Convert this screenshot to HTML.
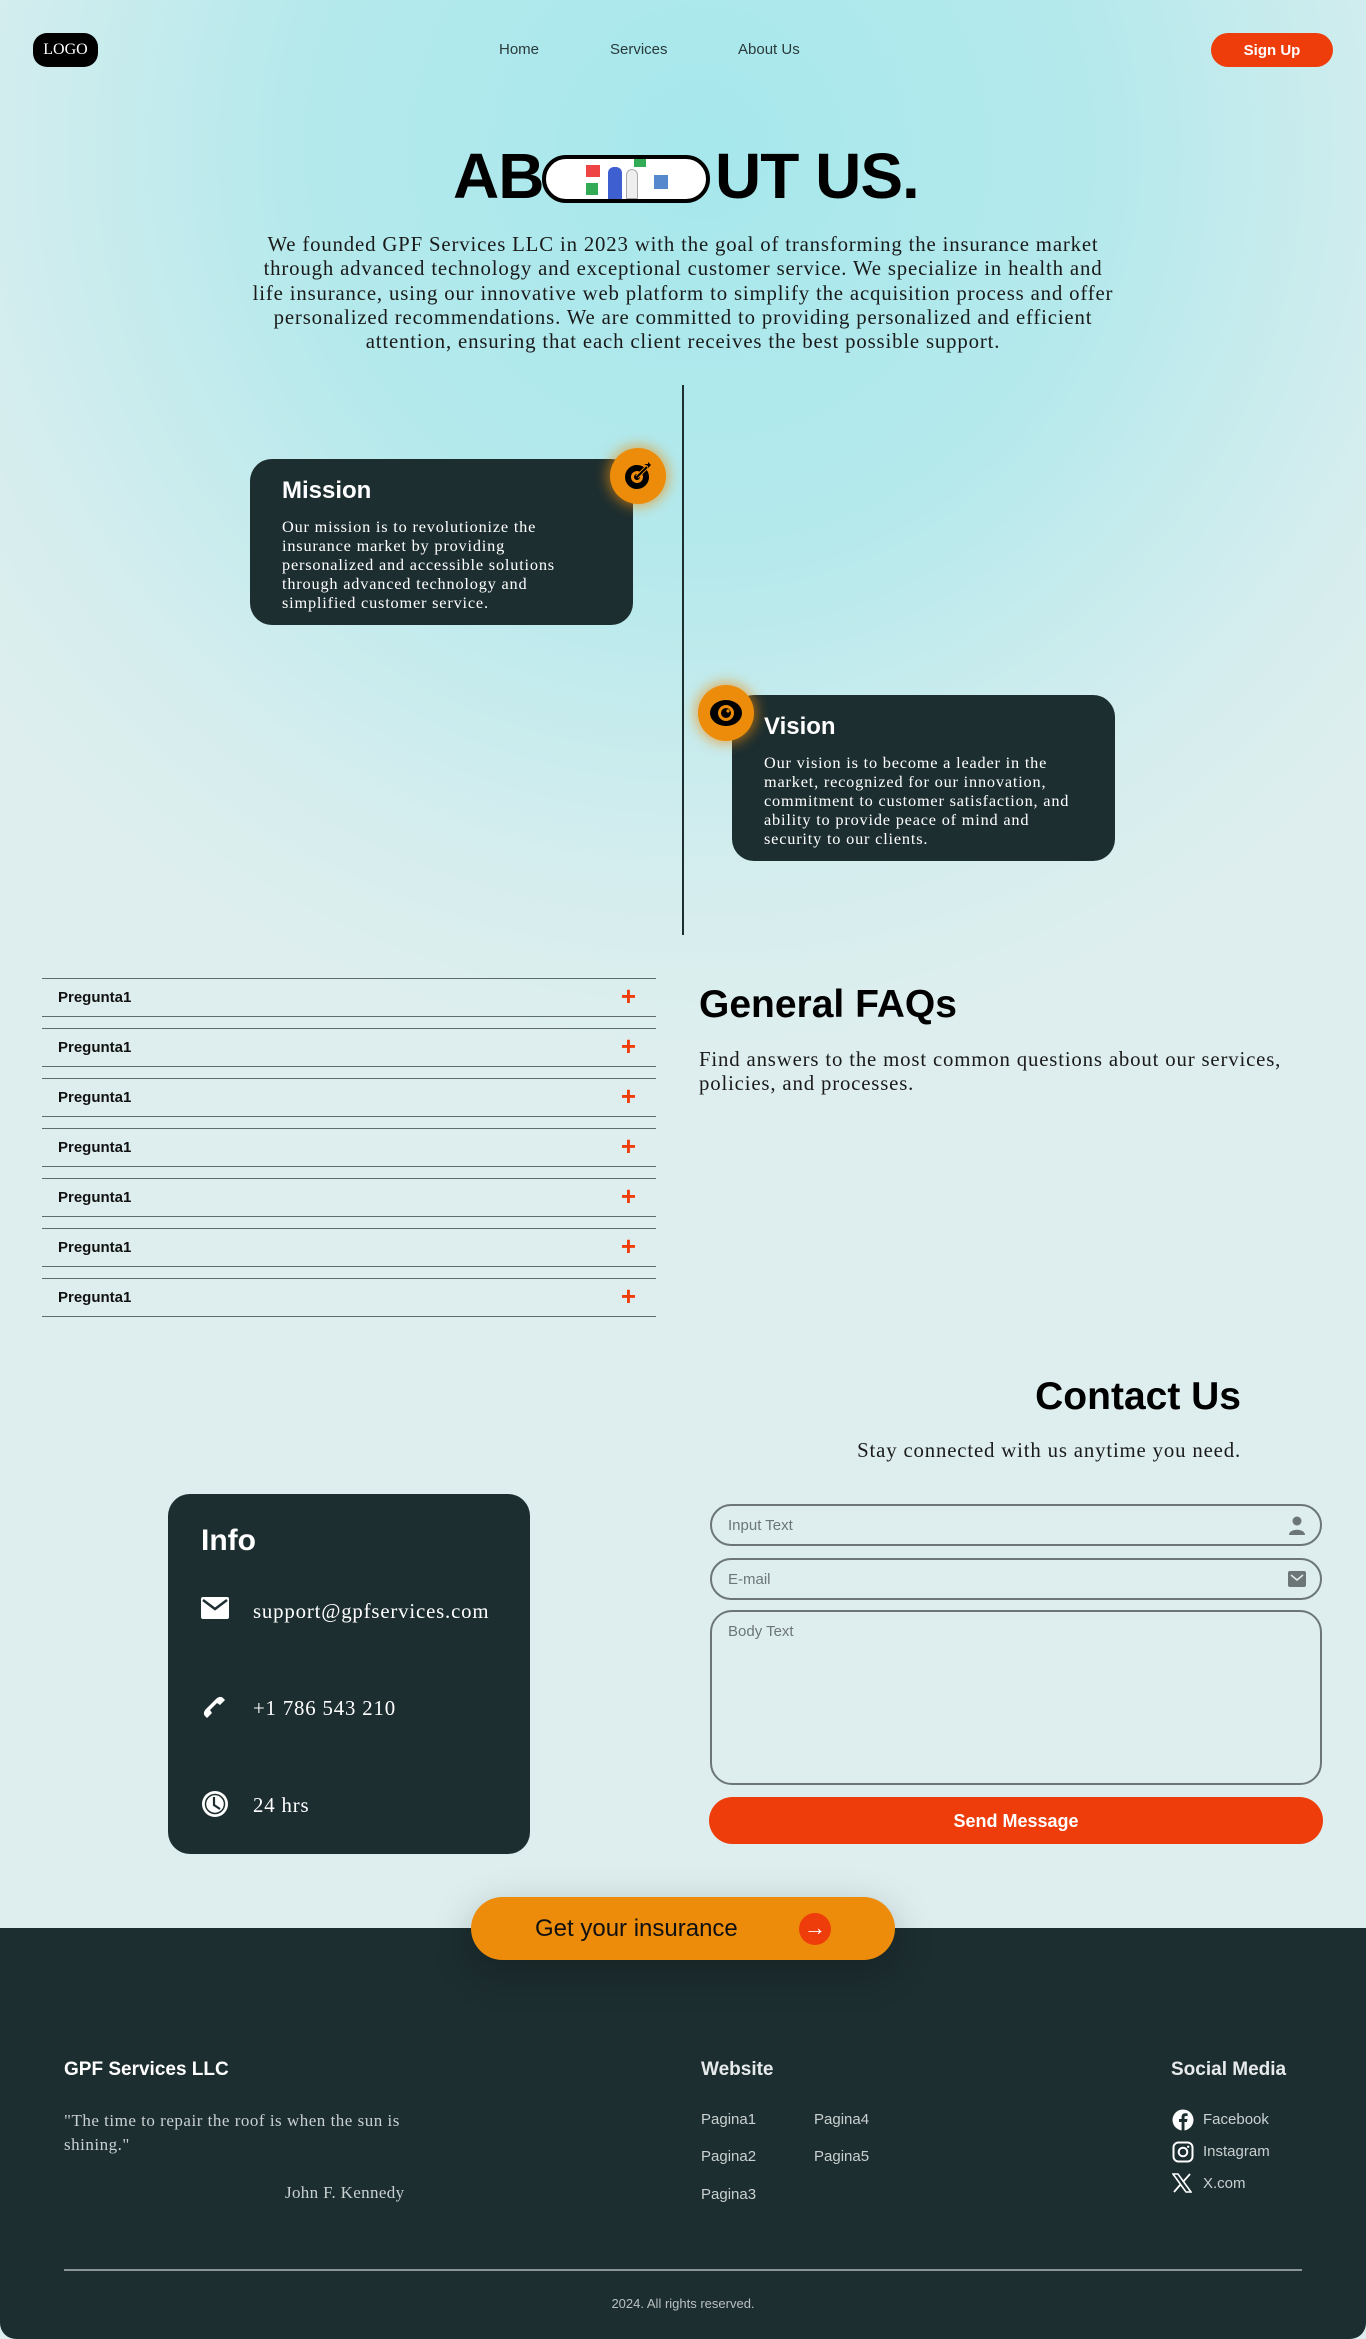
<!DOCTYPE html>
<html><head><meta charset="utf-8"><style>
*{margin:0;padding:0;box-sizing:border-box}
body{width:1366px;height:2339px;position:relative;overflow:hidden;font-family:"Liberation Sans",sans-serif;
background:radial-gradient(ellipse 900px 900px at 700px 150px,#a6e8ec 0%,#b5e9ec 45%,#d4edee 80%,#deeeee 100%),#deeeee;}
.a{position:absolute}
.serif{font-family:"Liberation Serif",serif;white-space:nowrap;letter-spacing:0.04em}
.nav{font-size:15px;color:#2a3a3c;top:41px}
.card{background:#1d2e30;border-radius:22px;color:#fff}
.ic{width:56px;height:56px;border-radius:50%;background:#ec8c0a;box-shadow:0 0 12px 3px rgba(236,140,10,.6);display:flex;align-items:center;justify-content:center}
.faq{left:42px;width:614px;height:39px;border-top:1.5px solid #5f6b6c;border-bottom:1.5px solid #5f6b6c;font-weight:bold;font-size:15px;color:#111;padding-left:16px;line-height:37px}
.faq span{position:absolute;right:20px;top:0;color:#ee3d0b;font-size:26px;font-weight:bold;line-height:35px}
.inp{left:710px;width:612px;border:2px solid #6c7676;border-radius:21px;font-size:15px;color:#6c7676;padding-left:16px}
.ft{color:#c9d0d0;font-size:15px}
</style></head><body>
<div class="a" style="left:33px;top:33px;width:65px;height:34px;background:#000;border-radius:14px;color:#fff;font-family:'Liberation Serif',serif;font-size:16px;line-height:34px;text-align:center">LOGO</div>
<div class="a nav" style="left:499px">Home</div>
<div class="a nav" style="left:610px">Services</div>
<div class="a nav" style="left:738px">About Us</div>
<div class="a" style="left:1211px;top:33px;width:122px;height:34px;background:#ee3d0b;border-radius:17px;color:#fff;font-weight:bold;font-size:15px;line-height:36px;text-align:center">Sign Up</div>

<div class="a" style="left:453px;top:140px;font-size:64px;font-weight:bold;color:#000;letter-spacing:-1px;line-height:72px">AB</div>
<div class="a" style="left:542px;top:155px;width:168px;height:48px;border:4px solid #000;border-radius:24px;background:#fff;overflow:hidden">
<div class="a" style="left:40px;top:6px;width:14px;height:12px;background:#e44"></div>
<div class="a" style="left:88px;top:0px;width:12px;height:8px;background:#3a5"></div>
<div class="a" style="left:40px;top:24px;width:12px;height:12px;background:#3a5"></div>
<div class="a" style="left:62px;top:8px;width:14px;height:32px;background:#3d5fd0;border-radius:6px 6px 0 0"></div>
<div class="a" style="left:80px;top:10px;width:12px;height:30px;background:#eee;border:1px solid #aaa;border-radius:6px 6px 0 0"></div>
<div class="a" style="left:108px;top:16px;width:14px;height:14px;background:#58c"></div>
</div>
<div class="a" style="left:715px;top:140px;font-size:64px;font-weight:bold;color:#000;letter-spacing:-1px;line-height:72px">UT US.</div>
<div class="a serif" style="left:183px;top:233px;width:1000px;text-align:center;font-size:20.8px;line-height:24.3px;color:#1a1a1a">We founded GPF Services LLC in 2023 with the goal of transforming the insurance market<br>through advanced technology and exceptional customer service. We specialize in health and<br>life insurance, using our innovative web platform to simplify the acquisition process and offer<br>personalized recommendations. We are committed to providing personalized and efficient<br>attention, ensuring that each client receives the best possible support.</div>

<div class="a" style="left:682px;top:385px;width:2px;height:550px;background:#1d2e30"></div>
<div class="a card" style="left:250px;top:459px;width:383px;height:166px;padding:16px 32px">
<div style="font-size:24px;font-weight:bold;line-height:32px">Mission</div>
<div class="serif" style="font-size:16.3px;line-height:19px;margin-top:10px;letter-spacing:0.05em">Our mission is to revolutionize the<br>insurance market by providing<br>personalized and accessible solutions<br>through advanced technology and<br>simplified customer service.</div></div>
<div class="a ic" style="left:610px;top:448px"><svg width="32" height="32" viewBox="0 0 32 32"><circle cx="15" cy="17" r="12" fill="#000"/><circle cx="15" cy="17" r="6" fill="#ec8c0a"/><circle cx="15" cy="17" r="3" fill="#000"/><path d="M15 17 L25 7" stroke="#ec8c0a" stroke-width="4"/><path d="M15 17 L25 7" stroke="#000" stroke-width="2"/><path d="M22 4 l4 0 0 -2 3 3 -3 3 0-2" fill="#000"/></svg></div>

<div class="a card" style="left:732px;top:695px;width:383px;height:166px;padding:16px 32px">
<div style="font-size:24px;font-weight:bold;line-height:32px">Vision</div>
<div class="serif" style="font-size:16.3px;line-height:19px;margin-top:10px;letter-spacing:0.05em">Our vision is to become a leader in the<br>market, recognized for our innovation,<br>commitment to customer satisfaction, and<br>ability to provide peace of mind and<br>security to our clients.</div></div>
<div class="a ic" style="left:698px;top:685px"><svg width="36" height="36" viewBox="0 0 36 36"><ellipse cx="18" cy="18" rx="16" ry="13" fill="#000"/><circle cx="18" cy="18" r="8" fill="#ec8c0a"/><circle cx="18" cy="18" r="5" fill="#000"/><circle cx="20" cy="16" r="1.6" fill="#ec8c0a"/></svg></div>

<div class="a faq" style="top:978px">Pregunta1<span>+</span></div>
<div class="a faq" style="top:1028px">Pregunta1<span>+</span></div>
<div class="a faq" style="top:1078px">Pregunta1<span>+</span></div>
<div class="a faq" style="top:1128px">Pregunta1<span>+</span></div>
<div class="a faq" style="top:1178px">Pregunta1<span>+</span></div>
<div class="a faq" style="top:1228px">Pregunta1<span>+</span></div>
<div class="a faq" style="top:1278px">Pregunta1<span>+</span></div>
<div class="a" style="left:699px;top:983px;font-size:39px;font-weight:bold;color:#000">General FAQs</div>
<div class="a serif" style="left:699px;top:1048px;font-size:20.8px;line-height:24px;color:#1a1a1a">Find answers to the most common questions about our services,<br>policies, and processes.</div>

<div class="a" style="left:900px;width:341px;text-align:right;top:1375px;font-size:39px;font-weight:bold;color:#000">Contact Us</div>
<div class="a serif" style="left:700px;width:541px;text-align:right;top:1439px;font-size:20.8px;color:#1a1a1a">Stay connected with us anytime you need.</div>

<div class="a card" style="left:168px;top:1494px;width:362px;height:360px">
<div class="a" style="left:33px;top:30px;font-size:30px;font-weight:bold">Info</div>
<svg class="a" style="left:33px;top:103px" width="28" height="22" viewBox="0 0 28 22"><rect width="28" height="22" rx="2" fill="#fff"/><path d="M2 3 L14 12 L26 3" stroke="#1d2e30" stroke-width="2.5" fill="none"/></svg>
<div class="a serif" style="left:85px;top:106px;font-size:20.8px">support@gpfservices.com</div>
<svg class="a" style="left:33px;top:200px" width="26" height="26" viewBox="0 0 26 26"><path d="M4 22 C2 20 3 17 5 15 L15 5 C17 3 20 2 22 4 L24 6 L19 11 L16 9 L9 16 L11 19 L6 24 Z" fill="#fff"/></svg>
<div class="a serif" style="left:85px;top:203px;font-size:20.8px">+1 786 543 210</div>
<svg class="a" style="left:33px;top:296px" width="28" height="28" viewBox="0 0 28 28"><circle cx="14" cy="14" r="13" fill="#fff"/><circle cx="14" cy="14" r="9.5" fill="none" stroke="#1d2e30" stroke-width="1.5"/><path d="M13 7 V15 L19 19" stroke="#1d2e30" stroke-width="2.2" fill="none"/></svg>
<div class="a serif" style="left:85px;top:300px;font-size:20.8px">24 hrs</div>
</div>

<div class="a inp" style="top:1504px;height:42px;line-height:40px">Input Text<svg class="a" style="right:14px;top:10px" width="18" height="20" viewBox="0 0 18 20"><circle cx="9" cy="5" r="4.5" fill="#6c7676"/><path d="M1 19 C1 12 17 12 17 19 Z" fill="#6c7676"/></svg></div>
<div class="a inp" style="top:1558px;height:42px;line-height:40px">E-mail<svg class="a" style="right:14px;top:11px" width="18" height="16" viewBox="0 0 18 16"><rect width="18" height="16" rx="2" fill="#6c7676"/><path d="M3 4 L9 9 L15 4" stroke="#deeeee" stroke-width="1.5" fill="none"/></svg></div>
<div class="a inp" style="top:1610px;height:175px;padding-top:11px;border-radius:22px">Body Text</div>
<div class="a" style="left:709px;top:1797px;width:614px;height:47px;background:#ee3d0b;border-radius:24px;color:#fff;font-weight:bold;font-size:18px;line-height:48px;text-align:center">Send Message</div>

<div class="a" style="left:0;top:1928px;width:1366px;height:411px;background:#1d2e30;border-radius:0 0 16px 16px"></div>
<div class="a" style="left:471px;top:1897px;width:424px;height:63px;background:#ec8c0a;border-radius:32px;box-shadow:0 12px 40px rgba(0,0,0,.25)">
<div class="a" style="left:64px;top:18px;font-size:24px;color:#111">Get your insurance</div>
<div class="a" style="left:328px;top:16px;width:32px;height:32px;border-radius:50%;background:#ee3d0b;color:#fff;font-size:22px;line-height:30px;text-align:center">→</div></div>

<div class="a" style="left:64px;top:2059px;font-size:19px;font-weight:bold;color:#fff">GPF Services LLC</div>
<div class="a" style="left:701px;top:2059px;font-size:19px;font-weight:bold;color:#e6eaea">Website</div>
<div class="a" style="left:1171px;top:2059px;font-size:19px;font-weight:bold;color:#e6eaea">Social Media</div>
<div class="a serif" style="left:64px;top:2109px;font-size:17px;line-height:24px;color:#c9d0d0;letter-spacing:0.03em">"The time to repair the roof is when the sun is<br>shining."</div>
<div class="a serif" style="left:285px;top:2183px;font-size:17px;color:#c9d0d0;letter-spacing:0.02em">John F. Kennedy</div>
<div class="a ft" style="left:701px;top:2111px">Pagina1</div>
<div class="a ft" style="left:814px;top:2111px">Pagina4</div>
<div class="a ft" style="left:701px;top:2148px">Pagina2</div>
<div class="a ft" style="left:814px;top:2148px">Pagina5</div>
<div class="a ft" style="left:701px;top:2186px">Pagina3</div>
<svg class="a" style="left:1172px;top:2109px" width="22" height="22" viewBox="0 0 22 22"><circle cx="11" cy="11" r="10.5" fill="#fff"/><path d="M12.5 22 V13 H15 L15.5 10 H12.5 V8.3 C12.5 7.4 12.9 7 13.8 7 H15.6 V4.4 C15 4.3 14 4.2 13.2 4.2 C10.9 4.2 9.6 5.5 9.6 7.9 V10 H7 V13 H9.6 V22 Z" fill="#1d2e30"/></svg>
<div class="a ft" style="left:1203px;top:2111px">Facebook</div>
<svg class="a" style="left:1172px;top:2141px" width="22" height="22" viewBox="0 0 22 22"><rect x="1.5" y="1.5" width="19" height="19" rx="5" fill="none" stroke="#fff" stroke-width="2"/><circle cx="11" cy="11" r="4.3" fill="none" stroke="#fff" stroke-width="2"/><circle cx="16.2" cy="5.8" r="1.2" fill="#fff"/></svg>
<div class="a ft" style="left:1203px;top:2143px">Instagram</div>
<svg class="a" style="left:1172px;top:2173px" width="20" height="20" viewBox="0 0 20 20"><path d="M1 1 H6 L19 19 H14 Z" fill="none" stroke="#fff" stroke-width="1.6"/><path d="M18 1 L11.3 8.6 M2 19 L8.6 11.4" stroke="#fff" stroke-width="1.8"/></svg>
<div class="a ft" style="left:1203px;top:2175px">X.com</div>
<div class="a" style="left:64px;top:2269px;width:1238px;height:1.5px;background:#8a9696"></div>
<div class="a" style="left:0;width:1366px;text-align:center;top:2296px;font-size:13px;color:#b8c0c0">2024. All rights reserved.</div>
</body></html>
